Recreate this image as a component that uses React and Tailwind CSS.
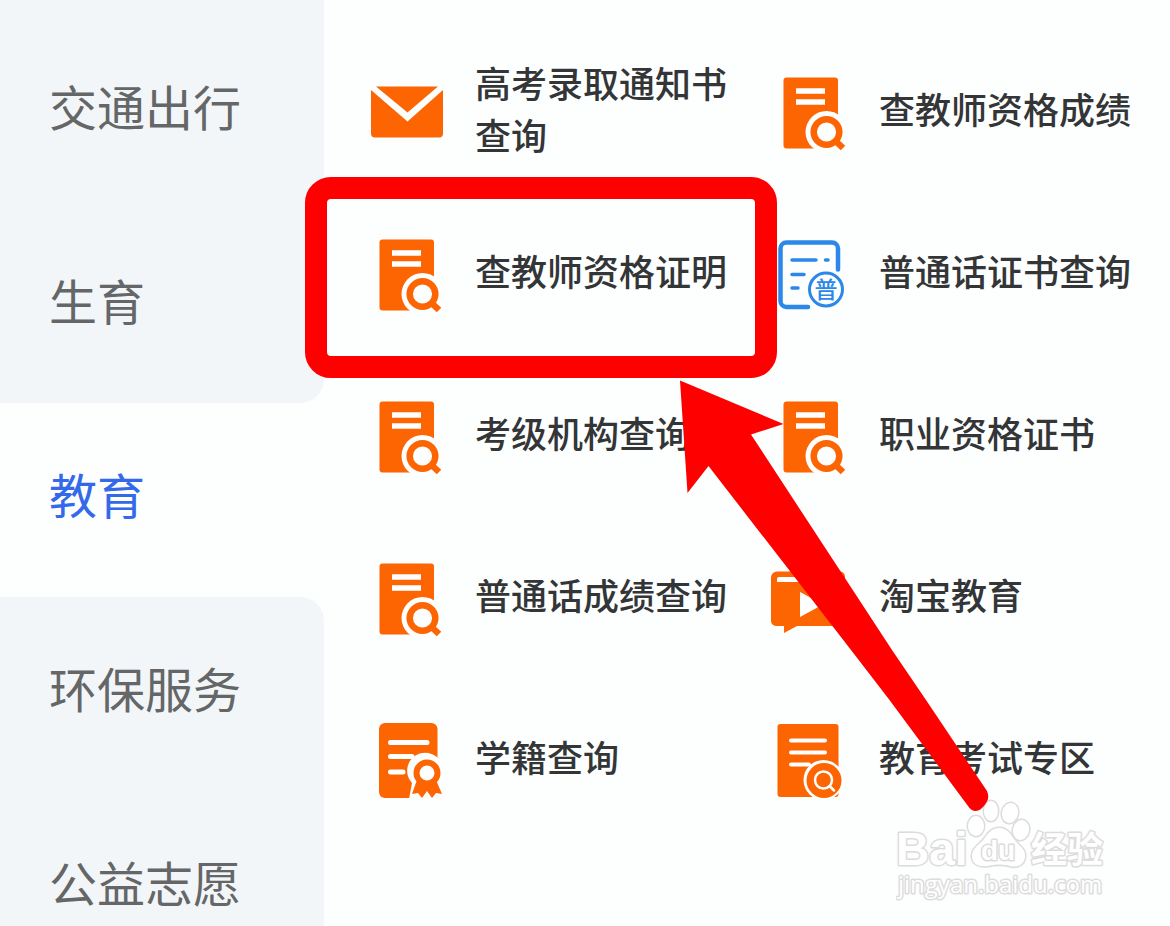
import React, { useState } from "react";

const DocSearchIcon = () => (
  <svg viewBox="0 0 72 80" className="w-[72px] h-20 shrink-0">
    <rect x="8.5" y="6.5" width="54.5" height="71" rx="3" fill="#fc6502" />
    <path d="M21 20h29M21 31h29" stroke="#fff" strokeWidth="5.5" />
    <circle cx="51.5" cy="61" r="21" fill="#fdfefe" />
    <path d="M60 69.5l8 7.500" stroke="#fc6502" strokeWidth="6.5" />
    <circle cx="51.5" cy="61" r="12.8" fill="#fdfefe" stroke="#fc6502" strokeWidth="6.5" />
  </svg>
);

const MailIcon = () => (
  <svg viewBox="0 0 72 80" className="w-[72px] h-20 shrink-0">
    <path d="M5 15.500h62L36.500 41.500Z" fill="#fc6502" />
    <path d="M0 19L36.500 50.500 72 19v43.500a4 4 0 0 1-4 4H4a4 4 0 0 1-4-4Z" fill="#fc6502" />
  </svg>
);

const MandarinIcon = () => (
  <svg viewBox="0 0 72 80" className="w-[72px] h-20 shrink-0" fill="none" stroke="#2b88e8" strokeLinecap="round">
    <path d="M63 36.500V15.500a6 6 0 0 0-6-6H11.500a6 6 0 0 0-6 6V68a6 6 0 0 0 6 6H33" strokeWidth="4.500" />
    <path d="M17 27h24M50.500 27h2.500M17 41.500h12M17 55h6" strokeWidth="3.500" />
    <circle cx="51" cy="56.500" r="16.500" strokeWidth="3" />
    <text
      x="51"
      y="65"
      textAnchor="middle"
      stroke="none"
      fill="#2b88e8"
      className="text-[23px] font-medium font-['Noto_Sans_CJK_SC',sans-serif]"
    >
      普
    </text>
  </svg>
);

const VideoIcon = () => (
  <svg viewBox="0 0 72 80" className="w-[72px] h-20 shrink-0 overflow-visible">
    <path
      d="M2 14.500H65a5 5 0 0 1 5 5V64a5 5 0 0 1-5 5H22L9 76V69H1a5 5 0 0 1-5-5V20.500a6 6 0 0 1 6-6Z"
      fill="#fc6502"
    />
    <path d="M4 20H60V25H2V22Q2 20 4 20Z" fill="#fff" />
    <path d="M25 35L48 47.500 25 60Z" fill="#fff" />
  </svg>
);

const CertificateIcon = () => (
  <svg viewBox="0 0 72 80" className="w-[72px] h-20 shrink-0">
    <rect x="8" y="4" width="58.500" height="75" rx="6" fill="#fc6502" />
    <path d="M19.500 23.500H56M19.500 37.500H41M19.500 53H32" stroke="#fff" strokeWidth="5" strokeLinecap="round" />
    <path d="M38 80L41 64a18 18 0 1 1 31-10V80Z" fill="#fdfefe" />
    <path d="M46 61L41 75l6-1 4 5 5-7 5 7 4-5 6 1-6-14Z" fill="#fc6502" />
    <circle cx="56" cy="54" r="10.500" fill="#fff" stroke="#fc6502" strokeWidth="6" />
  </svg>
);

const ExamIcon = () => (
  <svg viewBox="0 0 72 80" className="w-[72px] h-20 shrink-0">
    <rect x="2.500" y="5" width="61" height="73" rx="3" fill="#fc6502" />
    <path d="M16 21.500H50M16 33.500H50M16 45.500H34" stroke="#fff" strokeWidth="4" strokeLinecap="round" />
    <circle cx="48.500" cy="61" r="20" fill="#fdfefe" />
    <circle cx="49" cy="61.500" r="17.500" fill="#fc6502" />
    <g fill="none" stroke="#fff" strokeWidth="2.500" strokeLinecap="round">
      <circle cx="48.500" cy="61" r="8.500" />
      <path d="M54.500 67l4.500 4.500" />
    </g>
  </svg>
);

const services = [
  { name: "高考录取通知书查询", Icon: MailIcon },
  { name: "查教师资格成绩", Icon: DocSearchIcon },
  { name: "查教师资格证明", Icon: DocSearchIcon },
  { name: "普通话证书查询", Icon: MandarinIcon },
  { name: "考级机构查询", Icon: DocSearchIcon },
  { name: "职业资格证书", Icon: DocSearchIcon },
  { name: "普通话成绩查询", Icon: DocSearchIcon },
  { name: "淘宝教育", Icon: VideoIcon },
  { name: "学籍查询", Icon: CertificateIcon },
  { name: "教育考试专区", Icon: ExamIcon },
];

function Category({ name, active, onSelect }) {
  return (
    <button
      type="button"
      onClick={() => onSelect(name)}
      className={`block w-full pt-[58px] pl-[49px] text-left text-5xl leading-[64px] ${
        active ? "text-[#3469ea]" : "text-[#646667]"
      }`}
    >
      {name}
    </button>
  );
}

function Watermark() {
  return (
    <svg
      viewBox="0 0 220 106"
      className="absolute left-[572px] top-[798px] w-[220px] h-[106px]"
      fill="#fff"
      stroke="#dcdcdc"
      strokeWidth="3"
      paintOrder="stroke"
      strokeLinejoin="round"
    >
      <text x="0" y="67" className="text-[46px] font-bold font-['Liberation_Sans',sans-serif]">
        Bai
      </text>
      <ellipse cx="80" cy="28" rx="8" ry="10" />
      <ellipse cx="95" cy="13" rx="7" ry="10" />
      <ellipse cx="114" cy="15" rx="8" ry="10" transform="rotate(12 114 15)" />
      <ellipse cx="125" cy="32" rx="8" ry="10" transform="rotate(12 125 32)" />
      <path d="M103 30c8 0 11 5 15 11 5 7 12 10 11 18-1 8-8 11-15 9-8-2-14-2-22 0-8 1-16-1-16-10 0-8 7-11 12-17 4-6 8-11 15-11Z" />
      <text x="102" y="62" textAnchor="middle" className="text-[28px] font-bold font-['Liberation_Sans',sans-serif]">
        du
      </text>
      <text x="135" y="65" className="text-4xl font-bold font-['Noto_Sans_CJK_SC',sans-serif]">
        经验
      </text>
      <text x="2" y="95" className="text-2xl font-['Open_Sans',sans-serif]">
        jingyan.baidu.com
      </text>
    </svg>
  );
}

function App() {
  const [selected, setSelected] = useState("教育");

  return (
    <div className="flex min-h-screen bg-[#fdfefe] font-['Noto_Sans_CJK_SC',sans-serif]">
      <nav className="flex flex-col w-[324px] shrink-0">
        <div className="flex flex-col gap-[72px] pt-[15px] pb-[72px] bg-[#f3f6f8] rounded-br-3xl">
          <Category name="交通出行" active={selected === "交通出行"} onSelect={setSelected} />
          <Category name="生育" active={selected === "生育"} onSelect={setSelected} />
        </div>
        <div className="pb-[72px]">
          <Category name="教育" active={selected === "教育"} onSelect={setSelected} />
        </div>
        <div className="flex flex-col flex-1 gap-[72px] bg-[#f3f6f8] rounded-tr-3xl">
          <Category name="环保服务" active={selected === "环保服务"} onSelect={setSelected} />
          <Category name="公益志愿" active={selected === "公益志愿"} onSelect={setSelected} />
        </div>
      </nav>

      <main className="relative flex-1 pt-[30px] pl-[47px] pr-4">
        <div className="grid grid-cols-2 gap-x-[25px]">
          {services.map(({ name, Icon }) => (
            <a
              key={name}
              href="#"
              className="flex items-center gap-8 h-[162px] text-4xl leading-[52px] font-medium text-[#333537]"
            >
              <Icon />
              <span className="pb-1.5">{name}</span>
            </a>
          ))}
        </div>

        <Watermark />

        {/* highlight box + arrow */}
        <div className="absolute left-[-19px] top-[177px] w-[472px] h-[201px] border-[22px] border-[#fe0000] rounded-[26px]" />
        <svg viewBox="0 0 310 432" className="absolute left-[356px] top-[380px] w-[310px] h-[432px]" fill="#fe0000">
          <path d="M0 0.500L103.500 44 71 54.500 212 270 246 320 307 411Q310 418 306 423 302 430 296 431 291 431 288 426L209.500 320 171 270 28.500 86 7.500 113Z" />
        </svg>
      </main>
    </div>
  );
}

export default App;
